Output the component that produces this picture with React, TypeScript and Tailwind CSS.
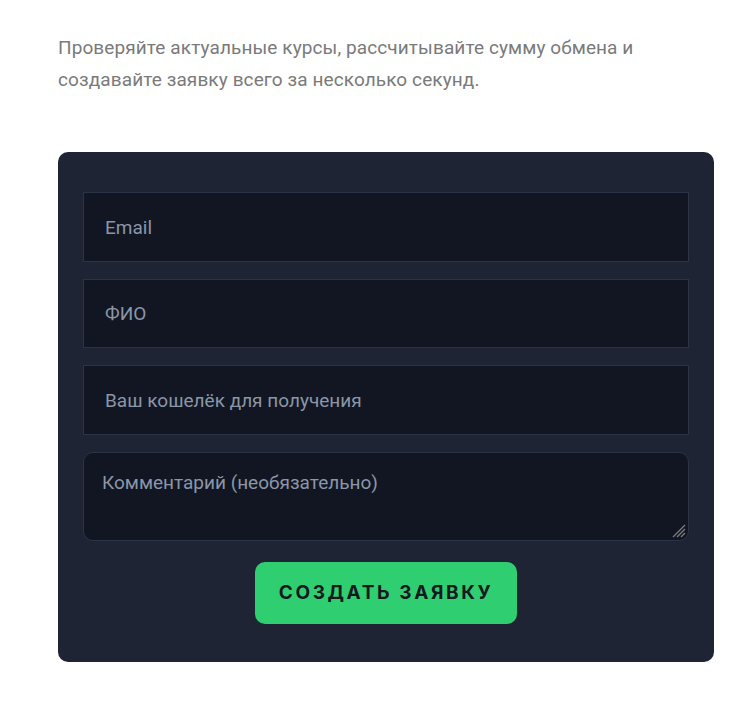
export default function App() {
  return (
    <main className="min-h-screen bg-white" style={{ fontFamily: "Roboto, 'Noto Sans', sans-serif" }}>
      <div className="pt-[32px] pl-[58px] pr-[42px]">
        <p className="text-[19px] leading-[32px] text-[#7a7a7a] tracking-[0.1px]">
          Проверяйте актуальные курсы, рассчитывайте сумму обмена и
          <br />
          создавайте заявку всего за несколько секунд.
        </p>

        <form className="mt-[56px] w-[656px] rounded-[10px] bg-[#1e2433] px-[25px] pt-[40px] pb-[38px] flex flex-col gap-[17px]">
          <input
            type="email"
            placeholder="Email"
            className="h-[70px] w-full bg-[#111622] border border-[#2b3346] px-[21px] text-[19px] text-[#cbd2dc] placeholder:text-[#8b96a8] outline-none"
          />
          <input
            type="text"
            placeholder="ФИО"
            className="h-[69px] w-full bg-[#111622] border border-[#2b3346] px-[21px] text-[19px] text-[#cbd2dc] placeholder:text-[#8b96a8] outline-none"
          />
          <input
            type="text"
            placeholder="Ваш кошелёк для получения"
            className="h-[70px] w-full bg-[#111622] border border-[#2b3346] px-[21px] text-[19px] text-[#cbd2dc] placeholder:text-[#8b96a8] outline-none"
          />
          <div className="relative">
            <textarea
              placeholder="Комментарий (необязательно)"
              className="block h-[89px] w-full resize-none rounded-[10px] bg-[#111622] border border-[#2b3346] px-[18px] py-[18px] text-[19px] leading-[24px] text-[#cbd2dc] placeholder:text-[#8b96a8] outline-none"
            />
            {/* resize grip */}
            <svg
              className="pointer-events-none absolute bottom-[3px] right-[3px]"
              width="14"
              height="14"
              viewBox="0 0 14 14"
            >
              <g stroke="#7d7d7d" strokeWidth="1.3">
                <line x1="13" y1="1" x2="1" y2="13" />
                <line x1="13" y1="5" x2="5" y2="13" />
                <line x1="13" y1="9" x2="9" y2="13" />
              </g>
            </svg>
          </div>
          <div className="flex justify-center pt-[4px]">
            <button
              type="button"
              className="h-[62px] w-[262px] rounded-[10px] bg-[#2fcf71] text-[19px] font-bold uppercase tracking-[2.6px] text-[#16191f]"
              style={{ fontFamily: "Inter, 'DejaVu Sans', sans-serif" }}
            >
              Создать заявку
            </button>
          </div>
        </form>
      </div>
    </main>
  );
}
